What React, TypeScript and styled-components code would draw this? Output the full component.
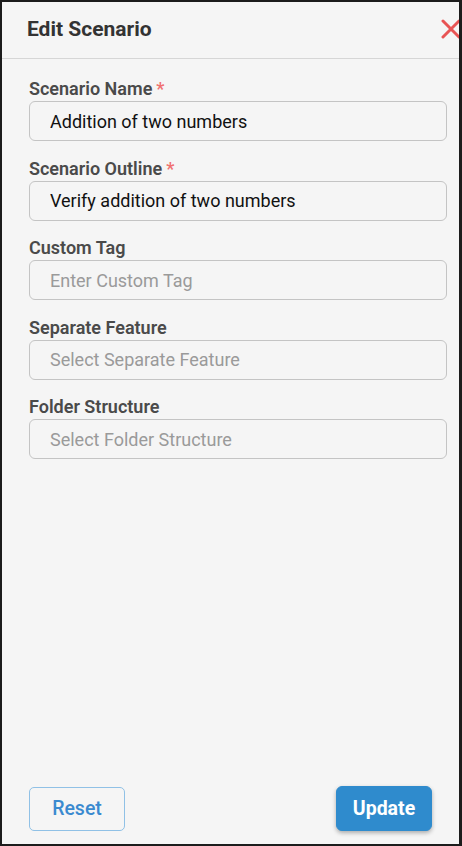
import styled, { createGlobalStyle } from "styled-components";

const GlobalStyle = createGlobalStyle`
  html, body {
    margin: 0;
    padding: 0;
    background: #f5f5f5;
  }
  * {
    box-sizing: border-box;
  }
`;

const Panel = styled.div`
  width: 462px;
  height: 846px;
  border: 2px solid #1c1c1c;
  border-right-width: 3px;
  background: #f5f5f5;
  display: flex;
  flex-direction: column;
  overflow: hidden;
  font-family: Roboto, "Liberation Sans", sans-serif;
`;

const Header = styled.div`
  height: 57px;
  flex-shrink: 0;
  display: flex;
  align-items: center;
  justify-content: space-between;
  padding: 0 0 3px 25px;
  border-bottom: 1px solid #d6d6d6;
`;

const Title = styled.h2`
  margin: 0;
  font-size: 21px;
  font-weight: 700;
  color: #333333;
`;

const CloseButton = styled.button`
  border: none;
  background: none;
  padding: 0;
  margin-right: -3px;
  display: flex;
  cursor: pointer;
`;

const Body = styled.div`
  flex: 1;
  display: flex;
  flex-direction: column;
  gap: 17.5px;
  padding: 20px 12px 0 27px;
`;

const Field = styled.div`
  display: flex;
  flex-direction: column;
  gap: 2px;
`;

const Label = styled.label`
  font-size: 18px;
  line-height: 20px;
  font-weight: 600;
  color: #4a4a4a;
`;

const Required = styled.span`
  color: #f07070;
  margin-left: 4px;
`;

const Input = styled.input`
  height: 40px;
  width: 100%;
  border: 1px solid #c4c4c4;
  border-radius: 6px;
  background: #f5f5f5;
  padding: 0 20px;
  font-family: inherit;
  font-size: 18px;
  color: #111111;
  outline: none;

  &::placeholder {
    color: #9a9a9a;
  }
`;

const Footer = styled.div`
  display: flex;
  justify-content: space-between;
  align-items: center;
  padding: 0 27px 13px 27px;
`;

const Button = styled.button<{ $primary?: boolean }>`
  width: 96px;
  height: ${(p) => (p.$primary ? "45px" : "44px")};
  border-radius: ${(p) => (p.$primary ? "6px" : "5px")};
  font-family: inherit;
  font-size: 19.5px;
  font-weight: ${(p) => (p.$primary ? 700 : 500)};
  cursor: pointer;
  border: 1px solid ${(p) => (p.$primary ? "#2f8bcd" : "#90c1e6")};
  background: ${(p) => (p.$primary ? "#2f8bcd" : "transparent")};
  color: ${(p) => (p.$primary ? "#ffffff" : "#3a8ad0")};
  box-shadow: ${(p) => (p.$primary ? "0 2px 4px rgba(0,0,0,0.3)" : "none")};
`;

const fields = [
  { label: "Scenario Name", required: true, value: "Addition of two numbers", placeholder: "" },
  { label: "Scenario Outline", required: true, value: "Verify addition of two numbers", placeholder: "" },
  { label: "Custom Tag", required: false, value: "", placeholder: "Enter Custom Tag" },
  { label: "Separate Feature", required: false, value: "", placeholder: "Select Separate Feature" },
  { label: "Folder Structure", required: false, value: "", placeholder: "Select Folder Structure" },
];

export default function App() {
  return (
    <>
      <GlobalStyle />
      <Panel>
        <Header>
          <Title>Edit Scenario</Title>
          <CloseButton aria-label="Close">
            <svg width="22" height="22" viewBox="0 0 22 22">
              <path
                d="M3 3 L19 19 M19 3 L3 19"
                stroke="#e85454"
                strokeWidth="3"
                strokeLinecap="round"
                fill="none"
              />
            </svg>
          </CloseButton>
        </Header>
        <Body>
          {fields.map((f) => (
            <Field key={f.label}>
              <Label>
                {f.label}
                {f.required && <Required>*</Required>}
              </Label>
              <Input defaultValue={f.value} placeholder={f.placeholder} />
            </Field>
          ))}
        </Body>
        <Footer>
          <Button>Reset</Button>
          <Button $primary>Update</Button>
        </Footer>
      </Panel>
    </>
  );
}
